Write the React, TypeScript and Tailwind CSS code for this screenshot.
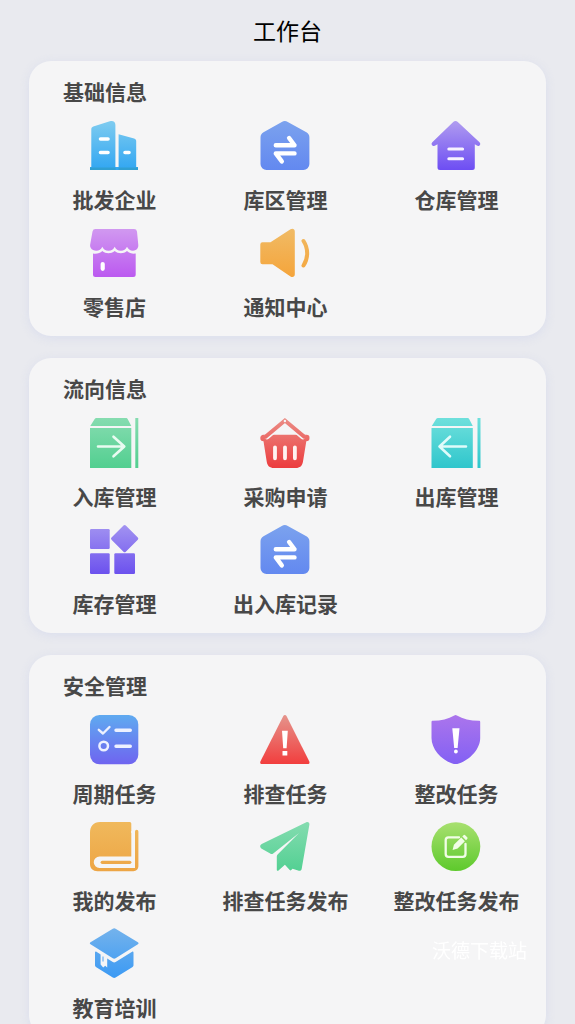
import React, { useId } from "react";

type IconProps = {
  from: string;
  to: string;
  children: (fill: string) => React.ReactNode;
};

// 50x50 canvas with a top to bottom gradient
function Icon({ from, to, children }: IconProps) {
  const id = useId();
  return (
    <svg viewBox="1 0 50 50" className="h-[50px] w-[50px] overflow-visible" fill="none" aria-hidden="true">
      <defs>
        <linearGradient id={id} gradientUnits="userSpaceOnUse" x1="25" y1="0" x2="25" y2="50">
          <stop offset="0" stopColor={from} />
          <stop offset="1" stopColor={to} />
        </linearGradient>
      </defs>
      {children(`url(#${id})`)}
    </svg>
  );
}

const PAPER = "#f5f5f6";

function CompanyIcon() {
  return (
    <Icon from="#7fccf0" to="#2fa5f2">
      {(fill) => (
        <>
          <path
            d="M2.3 46V8.2c0-1.3.8-2.2 2-2.6L20.8.3c3.3-.8 5.6.4 5.6 3.6V46h3.2V13.2l15.5 4.3c1.4.4 2.1 1.2 2.1 2.6V46h1.8v3H1v-3z"
            fill={fill}
          />
          <path d="M1 46.5h25.6V49H1zM29.5 46.5H49V49H29.5z" fill="#309fd2" />
          <path d="M11.5 18h7.5M11.5 31.5h7.5M36 31.5h4" stroke="#fff" strokeWidth="3.6" strokeLinecap="round" />
        </>
      )}
    </Icon>
  );
}

function TransferIcon() {
  return (
    <Icon from="#7ba2ee" to="#6288f0">
      {(fill) => (
        <>
          <path
            d="M21.8.9a6 6 0 0 1 6 0l18.6 10.3a6 6 0 0 1 3 5.2V43a6 6 0 0 1-6 6H6.5a6 6 0 0 1-6-6V16.4a6 6 0 0 1 3-5.2z"
            fill={fill}
          />
          <path
            d="M15.8 24.2h18.7l-5.4-7.2M34.5 32.4H15.8l6 8"
            stroke="#fff"
            strokeWidth="4.4"
            strokeLinecap="round"
            strokeLinejoin="round"
          />
        </>
      )}
    </Icon>
  );
}

function WarehouseIcon() {
  return (
    <Icon from="#b09cf0" to="#6c4cf3">
      {(fill) => (
        <>
          <path
            d="M22.2 1a3.3 3.3 0 0 1 4.6 0l21.7 20.2c2 2-.3 4.7-2.6 3.4L43.8 23.3V46.5A2.5 2.5 0 0 1 41.3 49H9a2.5 2.5 0 0 1-2.5-2.5V23.3l-2.2 1.3C2 25.9-.7 23.2 1.3 21.2z"
            fill={fill}
          />
          <path d="M17.8 28h13.8M17.8 37.8h13.8" stroke="#f7f2ff" strokeWidth="3" strokeLinecap="round" />
        </>
      )}
    </Icon>
  );
}

function ShopIcon() {
  return (
    <Icon from="#d19af0" to="#bb58f0">
      {(fill) => (
        <>
          <path
            d="M6.5 1H45a3 3 0 0 1 3 2.4L49.3 17c.3 3.5-2.3 5.7-5.3 5.7-3 0-5-1.7-6-4-1.2 2.5-3.2 4-6.1 4-3 0-5-1.5-6.2-4-1.2 2.5-3.2 4-6.2 4s-5-1.5-6.2-4c-1.1 2.5-3.2 4-6.2 4-3.2 0-6.3-2.2-6-5.7L3.5 3.4A3 3 0 0 1 6.5 1z"
            fill={fill}
          />
          <path
            d="M4 25.5c3.7.7 7-.4 9.3-2.5 3.5 3 8.8 3 12.4 0 3.5 3 8.8 3 12.3 0 2.5 2.1 5.2 3.1 8.7 2.6V46.5A2.5 2.5 0 0 1 44.2 49H6.5A2.5 2.5 0 0 1 4 46.5z"
            fill={fill}
          />
          <path d="M13.7 36v4.8" stroke="#fff" strokeWidth="4.2" strokeLinecap="round" />
        </>
      )}
    </Icon>
  );
}

function NoticeIcon() {
  return (
    <Icon from="#f0bb66" to="#f5a43a">
      {(fill) => (
        <>
          <path
            d="M2.5 14.3h8L30.5 1.3C32.6 0 34.8.9 34.8 3.5v42.7c0 2.6-2.2 3.5-4.3 2.2L12.5 36.2H2.5A2.2 2.2 0 0 1 .3 34V16.5a2.2 2.2 0 0 1 2.2-2.2z"
            fill={fill}
          />
          <path d="M43.5 13c4.9 7.5 4.9 17 0 24.5" stroke={fill} strokeWidth="4" strokeLinecap="round" />
        </>
      )}
    </Icon>
  );
}

function StockInIcon() {
  return (
    <Icon from="#86dcb0" to="#52cf90">
      {(fill) => (
        <>
          <path d="M7.5 0H36.8c1 0 1.6.4 2 1.2L42.3 8H1.3L5.5 1.2C6 .4 6.6 0 7.5 0zM1 10h41.3v40H1zM46.3 0h3v50h-3z" fill={fill} />
          <path
            d="M9 28.5h26M24.5 18.7l10.8 9.8-10.8 9.8"
            stroke="#e9fbf1"
            strokeWidth="2.6"
            strokeLinecap="round"
            strokeLinejoin="round"
          />
        </>
      )}
    </Icon>
  );
}

function StockOutIcon() {
  return (
    <Icon from="#6fe0dc" to="#2fc6cc">
      {(fill) => (
        <>
          <path d="M7 0H36.3c1 0 1.6.4 2 1.2L41.8 8H.8L5 1.2C5.5.4 6.1 0 7 0zM.5 10h41.3v40H.5zM46.5 0h3v50h-3z" fill={fill} />
          <path
            d="M35 28.5H9M19 18.7L8.5 28.5 19 38.3"
            stroke="#dffbfa"
            strokeWidth="2.6"
            strokeLinecap="round"
            strokeLinejoin="round"
          />
        </>
      )}
    </Icon>
  );
}

function BasketIcon() {
  return (
    <Icon from="#eb8d86" to="#ec3c3e">
      {(fill) => (
        <>
          <path
            d="M3.5 16.8h43a3 3 0 0 1 3 3.2 3.3 3.3 0 0 1-3.2 3.3L43 43.5c-.7 4.4-3 6.5-7.3 6.5H14c-4.3 0-6.7-2.1-7.3-6.5L3.5 23.3A3.3 3.3 0 0 1 .3 20a3 3 0 0 1 3.2-3.2z"
            fill={fill}
          />
          <path d="M7 18.7L24.9 3.5 42.8 18.7" stroke={PAPER} strokeWidth="5.2" strokeLinecap="round" />
          <path d="M5.5 18.7L24.9 2.5 44.3 18.7" stroke={fill} strokeWidth="4" strokeLinecap="round" />
          <circle cx="24.9" cy="3" r="1.2" fill={PAPER} />
          <path d="M15 29.3v11M25 29.3v11M34.9 29.3v11" stroke="#fff3f1" strokeWidth="3.8" strokeLinecap="round" />
        </>
      )}
    </Icon>
  );
}

function InventoryIcon() {
  return (
    <Icon from="#a293f1" to="#6b50ee">
      {(fill) => (
        <>
          <rect x="1" y="4" width="19.7" height="20" rx="1.2" fill={fill} />
          <rect x="1" y="28.3" width="19.7" height="20.7" rx="1.2" fill={fill} />
          <rect x="25.3" y="28.3" width="20.7" height="20.7" rx="1.2" fill={fill} />
          <path d="M34.5.5a1.6 1.6 0 0 1 2.3 0l12 12a1.6 1.6 0 0 1 0 2.2l-12 12a1.6 1.6 0 0 1-2.3 0l-12-12a1.6 1.6 0 0 1 0-2.2z" fill={fill} />
        </>
      )}
    </Icon>
  );
}

function CycleTaskIcon() {
  return (
    <Icon from="#5faaf0" to="#6f63f0">
      {(fill) => (
        <>
          <rect x="1" y="0" width="48.3" height="49.3" rx="9.5" fill={fill} />
          <path d="M9.8 14.8l4.2 3.7 6.5-6.5" stroke="#edf1ff" strokeWidth="2.4" strokeLinecap="round" strokeLinejoin="round" />
          <circle cx="14.7" cy="31" r="4.3" stroke="#edf1ff" strokeWidth="2.5" />
          <path d="M27 15.2h14.3M27 31.2h14.3" stroke="#edf1ff" strokeWidth="3.4" strokeLinecap="round" />
        </>
      )}
    </Icon>
  );
}

function WarningIcon() {
  return (
    <Icon from="#e5948c" to="#f23c3c">
      {(fill) => (
        <>
          <path d="M23.3.9c.7-1.2 2.5-1.2 3.2 0L49.3 46.5c.6 1.3-.2 2.6-1.6 2.6H2c-1.4 0-2.2-1.3-1.6-2.6z" fill={fill} />
          <path d="M22 15.8h5.8l-1.2 17.5h-3.4zM22.5 36h4.8v4.6h-4.8z" fill="#fff" />
        </>
      )}
    </Icon>
  );
}

function ShieldIcon() {
  return (
    <Icon from="#ab75ec" to="#8260f4">
      {(fill) => (
        <>
          <path
            d="M23.3.4a2.5 2.5 0 0 1 2.6 0c6 3.4 13.3 5.3 22 5.4.8 0 1.3.5 1.3 1.3V23c0 10.5-9.5 21.5-21.3 25.5a10 10 0 0 1-6.6 0C9.5 44.5.5 33.5.5 23V7.1c0-.8.5-1.3 1.3-1.3 8.3-.1 15.5-2 21.5-5.4z"
            fill={fill}
          />
          <path d="M21.3 13.2h7.2L26.6 33h-3.4z" fill="#fff" />
          <circle cx="24.9" cy="36.5" r="1.9" fill="#fff" />
        </>
      )}
    </Icon>
  );
}

function BookIcon() {
  return (
    <Icon from="#f0b95c" to="#eda545">
      {(fill) => (
        <>
          <path
            d="M11 0h29.8a1.5 1.5 0 0 1 1.5 1.500V11H46V9.500a1.700 1.700 0 0 1 3.400 0V44c0 3-2 5.200-5 5.200H8.500C4 49.200 1 46.500 1 42V11C1 4 4.500 0 11 0z"
            fill={fill}
          />
          <path d="M42.300 9H46v37H10.500a5.700 5.700 0 0 1 0-11.500h31.800z" fill={PAPER} />
          <path d="M13.200 40.300h27.600" stroke={fill} strokeWidth="3.200" strokeLinecap="round" />
        </>
      )}
    </Icon>
  );
}

function PlaneIcon() {
  return (
    <Icon from="#84dcb0" to="#52d092">
      {(fill) => (
        <path
          d="M46.3.3c1.8-.7 3.4.4 3.1 2.3L41.7 46.700c-.3 2-1.800 2.500-3.600 1.800L32.500 46.800l-1.200 1.300c-.5.600-1.100.6-1.600 0L24.900 42.700 18.500 48.500c-.9.7-1.700.2-1.700-.8V34.500c0-.8.2-1.400.8-2L39 11 13.200 31.500c-1 .8-2 .8-3 .1L1.300 26.500c-1.700-1.300-1.500-3.600.4-4.500z"
          fill={fill}
        />
      )}
    </Icon>
  );
}

function EditIcon() {
  return (
    <Icon from="#a8e070" to="#5cc92b">
      {(fill) => (
        <>
          <circle cx="24.9" cy="24.6" r="24.4" fill={fill} />
          <path
            d="M28 15.3H17.5a2.8 2.8 0 0 0-2.8 2.8v14a2.8 2.8 0 0 0 2.8 2.8h14.2a2.8 2.8 0 0 0 2.8-2.8V22"
            stroke="#f1fde6"
            strokeWidth="2.3"
            strokeLinecap="round"
          />
          <path d="M21.6 28l1.3-5.2 7.3-7.2 3.7 3.7-7.3 7.3zM31.3 14.5l1.2-1.2a1.2 1.2 0 0 1 1.7 0l2 2a1.2 1.2 0 0 1 0 1.7L35 18.2z" fill="#f1fde6" />
        </>
      )}
    </Icon>
  );
}

function TrainingIcon() {
  return (
    <Icon from="#73b2ec" to="#3a99f4">
      {(fill) => (
        <>
          <path d="M23.8-.3a2.6 2.6 0 0 1 2.8 0L48.9 13.2c.9.6.9 1.4 0 2L26.6 29.3a2.6 2.6 0 0 1-2.8 0L1.5 15.2c-.9-.6-.9-1.4 0-2z" fill={fill} />
          <path
            d="M6 23.5c0-.9.7-1.2 1.4-.8l16.4 10.4a2.6 2.6 0 0 0 2.8 0l16.5-10.4c.8-.5 1.4-.1 1.4.8V36c0 1-.4 1.7-1.3 2.3L26.6 48.5a2.6 2.6 0 0 1-2.8 0L7.3 38.3C6.4 37.7 6 37 6 36z"
            fill={fill}
          />
          <path d="M11.6 24.5l6.600 4.200V38.500l-2-1.800-2 1.800-2.600-3z" fill={PAPER} />
          <path d="M14 27.500v5" stroke={fill} strokeWidth="1" />
        </>
      )}
    </Icon>
  );
}

export default function App() {
  const sections = [
    {
      id: "base",
      title: "基础信息",
      items: [
        { name: "批发企业", icon: CompanyIcon },
        { name: "库区管理", icon: TransferIcon },
        { name: "仓库管理", icon: WarehouseIcon },
        { name: "零售店", icon: ShopIcon },
        { name: "通知中心", icon: NoticeIcon },
      ],
    },
    {
      id: "flow",
      title: "流向信息",
      items: [
        { name: "入库管理", icon: StockInIcon },
        { name: "采购申请", icon: BasketIcon },
        { name: "出库管理", icon: StockOutIcon },
        { name: "库存管理", icon: InventoryIcon },
        { name: "出入库记录", icon: TransferIcon },
      ],
    },
    {
      id: "safety",
      title: "安全管理",
      items: [
        { name: "周期任务", icon: CycleTaskIcon },
        { name: "排查任务", icon: WarningIcon },
        { name: "整改任务", icon: ShieldIcon },
        { name: "我的发布", icon: BookIcon },
        { name: "排查任务发布", icon: PlaneIcon },
        { name: "整改任务发布", icon: EditIcon },
        { name: "教育培训", icon: TrainingIcon },
      ],
    },
  ];

  return (
    <div className="h-screen overflow-y-auto bg-[#e9eaef] font-['Noto_Sans_CJK_SC',sans-serif] [scrollbar-width:none]">
      <header className="pt-[15px] pb-4 text-center">
        <h1 className="text-[23px] leading-[30px] text-black">工作台</h1>
      </header>
      <main className="flex flex-col gap-[22px] px-[29px] pb-6">
        {sections.map((section) => (
          <section
            key={section.id}
            aria-labelledby={`section-${section.id}`}
            className="rounded-[22px] bg-[#f5f5f6] py-4 shadow-[0_2px_10px_rgba(200,206,235,0.45)]"
          >
            <h2
              id={`section-${section.id}`}
              className="px-[34px] text-[21px] leading-7 font-bold text-[#484848]"
            >
              {section.title}
            </h2>
            <ul className="mt-4 grid grid-cols-3 gap-y-[15px] pr-1">
              {section.items.map((item) => (
                <li key={item.name}>
                  <button type="button" className="flex w-full flex-col items-center gap-[14px]">
                    <item.icon />
                    <span className="text-[21px] leading-7 font-bold whitespace-nowrap text-[#484848]">
                      {item.name}
                    </span>
                  </button>
                </li>
              ))}
            </ul>
          </section>
        ))}
      </main>
      <p className="pointer-events-none fixed right-12 bottom-[60px] text-[19px] leading-7 text-white">
        沃德下载站
      </p>
    </div>
  );
}
